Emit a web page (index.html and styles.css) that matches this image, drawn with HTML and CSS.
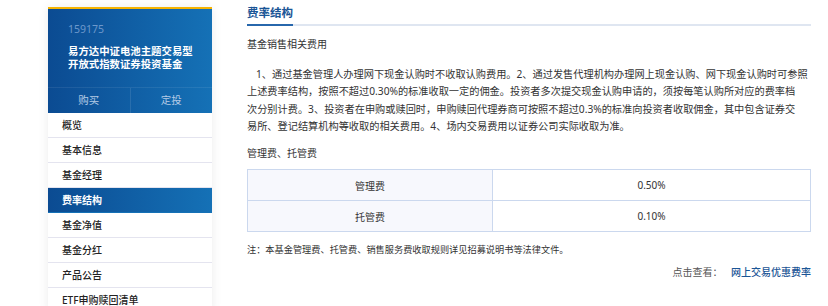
FILE: index.html
```html
<!DOCTYPE html>
<html lang="zh-CN">
<head>
  <meta charset="UTF-8">
  <meta name="viewport" content="width=device-width, initial-scale=1.0">
  <title>费率结构</title>
  <link rel="stylesheet" href="styles.css">
</head>
<body>
  <div class="page">
    <div class="sidebar">
      <div class="fund-head">
        <div class="fund-code">159175</div>
        <div class="fund-name">易方达中证电池主题交易型<br>开放式指数证券投资基金</div>
      </div>
      <div class="fund-actions">
        <a class="action">购买</a>
        <a class="action">定投</a>
      </div>
      <ul class="side-nav">
        <li>概览</li>
        <li>基本信息</li>
        <li>基金经理</li>
        <li class="active">费率结构</li>
        <li>基金净值</li>
        <li>基金分红</li>
        <li>产品公告</li>
        <li>ETF申购赎回清单</li>
      </ul>
    </div>

    <div class="main">
      <h2 class="section-title"><span>费率结构</span></h2>

      <h3 class="sub-title">基金销售相关费用</h3>
      <p class="fee-text">1、通过基金管理人办理网下现金认购时不收取认购费用。2、通过发售代理机构办理网上现金认购、网下现金认购时可参照<br>上述费率结构，按照不超过0.30%的标准收取一定的佣金。投资者多次提交现金认购申请的，须按每笔认购所对应的费率档<br>次分别计费。3、投资者在申购或赎回时，申购赎回代理券商可按照不超过0.3%的标准向投资者收取佣金，其中包含证券交<br>易所、登记结算机构等收取的相关费用。4、场内交易费用以证券公司实际收取为准。</p>

      <h3 class="sub-title second">管理费、托管费</h3>
      <table class="fee-table">
        <tr>
          <th>管理费</th>
          <td>0.50%</td>
        </tr>
        <tr>
          <th>托管费</th>
          <td>0.10%</td>
        </tr>
      </table>

      <p class="note">注：本基金管理费、托管费、销售服务费收取规则详见招募说明书等法律文件。</p>
      <div class="more">点击查看： <a href="#">网上交易优惠费率</a></div>
    </div>
  </div>
</body>
</html>
```

FILE: styles.css
```css
body {
  margin: 0;
  background-color: #fff;
  font-family: "Noto Sans", "Noto Sans CJK SC", sans-serif;
  color: #333;
}
.page {
  display: flex;
  align-items: flex-start;
  padding: 7px 0 0 48px;
}
.sidebar {
  width: 164px;
  flex-shrink: 0;
  border-top: 2px solid #f6b300;
  background-color: #fff;
  box-shadow: 0 0 10px rgba(0, 0, 0, 0.08);
}
.fund-head {
  background: linear-gradient(to right, #0b4b92, #1571b6);
  padding: 13px 10px 16px 20px;
}
.fund-code {
  font-size: 10.5px;
  line-height: 14px;
  color: #6c98cc;
}
.fund-name {
  margin-top: 9px;
  font-size: 10.4px;
  line-height: 13px;
  font-weight: 700;
  color: #fff;
}
.fund-actions {
  display: flex;
  background: linear-gradient(to right, #0b4b92, #1571b6);
  border-top: 1px solid rgba(255, 255, 255, 0.08);
}
.action {
  flex: 1;
  height: 25px;
  line-height: 25px;
  text-align: center;
  font-size: 10.5px;
  color: #b5cbe6;
}
.action + .action {
  border-left: 1px solid rgba(255, 255, 255, 0.1);
}
.side-nav {
  list-style: none;
  margin: 0;
  padding: 0;
}
.side-nav li {
  height: 24px;
  line-height: 24px;
  padding-left: 14px;
  font-size: 10px;
  font-weight: 500;
  color: #222;
  border-bottom: 1px solid #e4e4ef;
}
.side-nav li.active {
  background: linear-gradient(to right, #0b4b92, #1571b6);
  color: #fff;
  font-weight: 700;
  border-bottom-color: #1571b6;
}
.main {
  width: 564px;
  margin-left: 35px;
}
.section-title {
  margin: -2px 0 0;
  font-size: 11.5px;
  line-height: 16px;
  color: #1a5596;
  font-weight: 700;
  border-bottom: 2px solid #dfe6f1;
  padding-bottom: 3px;
}
.section-title span {
  display: inline-block;
  padding-bottom: 3px;
  margin-bottom: -5px;
  border-bottom: 2px solid #2767ac;
}
.sub-title {
  margin: 12px 0 0;
  font-family: "Liberation Serif", "Noto Sans CJK SC", serif;
  font-size: 10px;
  line-height: 14px;
  font-weight: 400;
  color: #333;
}
.sub-title.second {
  margin-top: 12px;
}
.fee-text {
  margin: 14px 0 0;
  font-size: 10.2px;
  line-height: 17.3px;
  text-indent: 9px;
  white-space: nowrap;
  color: #333;
}
.fee-table {
  width: 100%;
  margin-top: 8px;
  border-collapse: collapse;
  font-size: 10px;
}
.fee-table th,
.fee-table td {
  height: 30px;
  padding: 0;
  text-align: center;
  border: 1px solid #cbd8ee;
  font-weight: 400;
  color: #333;
}
.fee-table th {
  width: 244px;
  background-color: #f7f8fd;
}
.note {
  margin: 11px 0 0;
  font-size: 9.2px;
  line-height: 14px;
  color: #333;
}
.more {
  margin-top: 8px;
  text-align: right;
  font-size: 10px;
  line-height: 14px;
  color: #555;
}
.more a {
  margin-left: 6px;
  color: #1a5596;
  font-weight: 500;
  text-decoration: none;
}
```
